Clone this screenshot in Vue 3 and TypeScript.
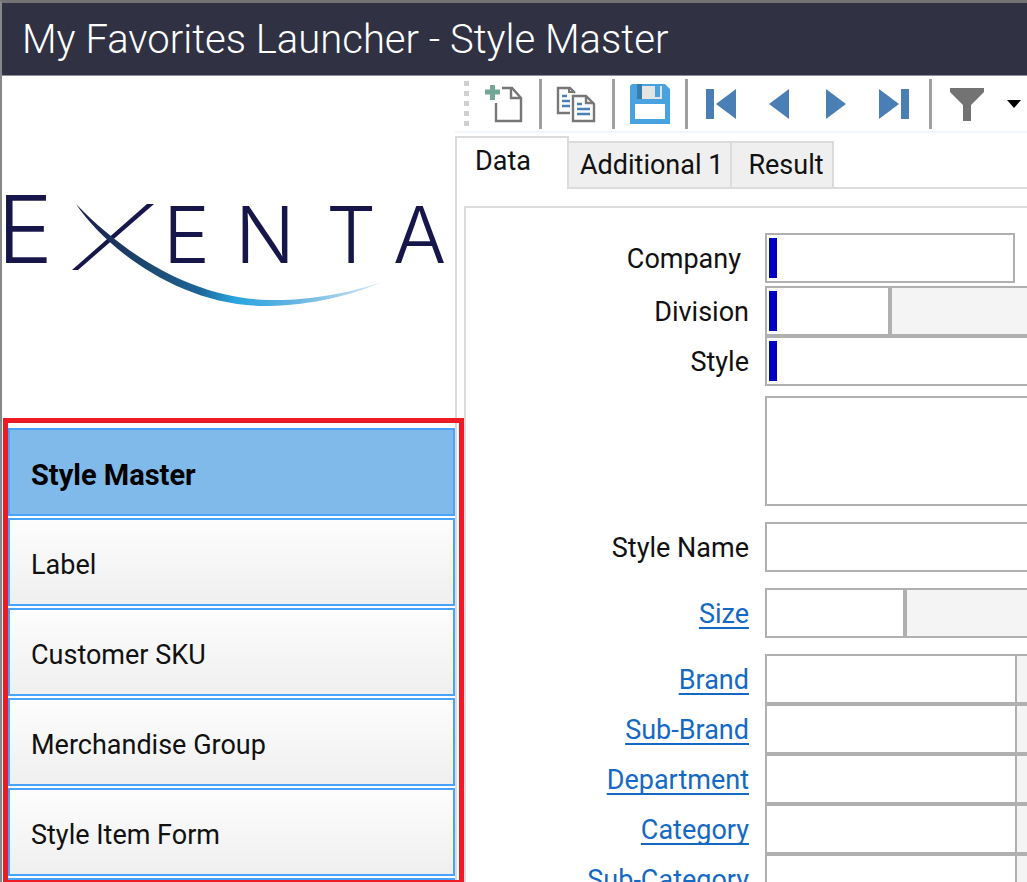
<script setup lang="ts">
import { ref } from 'vue'

interface Field {
  id: string
  label: string
  kind: 'short' | 'split' | 'full' | 'area'
  link?: boolean
  marked?: boolean
  width?: 'narrow' | 'middle' | 'broad'
  gap?: 'tight' | 'medium' | 'wide'
}

const favorites: string[] = ['Style Master', 'Label', 'Customer SKU', 'Merchandise Group', 'Style Item Form']
const activeFavorite = ref('Style Master')

const tabs: string[] = ['Data', 'Additional 1', 'Result']
const activeTab = ref('Data')

const fields: Field[] = [
  { id: 'company', label: 'Company', kind: 'short', marked: true },
  { id: 'division', label: 'Division', kind: 'split', marked: true, width: 'narrow', gap: 'tight' },
  { id: 'style', label: 'Style', kind: 'full', marked: true },
  { id: 'description', label: '', kind: 'area', gap: 'medium' },
  { id: 'style-name', label: 'Style Name', kind: 'full', gap: 'wide' },
  { id: 'size', label: 'Size', kind: 'split', link: true, width: 'middle', gap: 'wide' },
  { id: 'brand', label: 'Brand', kind: 'split', link: true, width: 'broad', gap: 'wide' },
  { id: 'sub-brand', label: 'Sub-Brand', kind: 'split', link: true, width: 'broad' },
  { id: 'department', label: 'Department', kind: 'split', link: true, width: 'broad' },
  { id: 'category', label: 'Category', kind: 'split', link: true, width: 'broad' },
  { id: 'sub-category', label: 'Sub-Category', kind: 'split', link: true, width: 'broad' },
]
</script>

<template>
  <div class="window">
    <header class="titlebar">
      <h1>My Favorites Launcher - Style Master</h1>
    </header>

    <div class="body">
      <aside class="sidebar">
        <div class="masthead">
          <svg class="logo" viewBox="0 0 453 120" role="img" aria-label="Exenta">
            <defs>
              <linearGradient id="swoosh" gradientUnits="userSpaceOnUse" x1="74" y1="0" x2="380" y2="0">
                <stop offset="0" stop-color="#1b1b48" />
                <stop offset="0.2" stop-color="#1c4368" />
                <stop offset="0.4" stop-color="#1e6496" />
                <stop offset="0.52" stop-color="#2aa5e0" />
                <stop offset="0.7" stop-color="#5fb2e2" />
                <stop offset="1" stop-color="#dbe8f4" />
              </linearGradient>
            </defs>
            <g class="wordmark">
              <text class="initial" x="-5" y="73">E</text>
              <text class="rest" x="161 233 324 391" y="73">ENTA</text>
            </g>
            <path d="M70 80 L76 80 L152 14 L145 14 Z" fill="#17164a" />
            <path d="M74 14 C105 60 180 117 266 116 C312 115 350 105 380 92 C350 102 310 111 266 110 C190 108 122 64 74 14 Z" fill="url(#swoosh)" />
          </svg>
        </div>

        <nav class="favorites" aria-label="My favorites">
          <button
            v-for="item in favorites"
            :key="item"
            type="button"
            class="favorite"
            :class="{ active: item === activeFavorite }"
            @click="activeFavorite = item"
          >{{ item }}</button>
          <div class="favorite"></div>
        </nav>
      </aside>

      <main class="content">
        <div class="toolbar" role="toolbar" aria-label="Record actions">
          <span class="grip"><i v-for="n in 5" :key="n"></i></span>
          <button type="button" class="tool new" aria-label="New">
            <svg width="40" height="40" viewBox="0 0 40 40">
              <path d="M12 19 V37 H37 V14 L28 4 H18" fill="none" stroke="#777" stroke-width="2.4" />
              <path d="M27 4 V14 H37" fill="none" stroke="#777" stroke-width="2.4" />
              <path d="M1 8 H16 M8.5 1 V16" stroke="#74a797" stroke-width="5" />
            </svg>
          </button>
          <span class="divider"></span>
          <button type="button" class="tool copy" aria-label="Copy">
            <svg width="40" height="40" viewBox="0 0 40 40">
              <path d="M14 29 H2 V4 H14 L19 9" fill="none" stroke="#777" stroke-width="2.4" />
              <path d="M13 4 V8 H18" fill="none" stroke="#777" stroke-width="2" />
              <path d="M6 12 H11 M6 17 H14 M6 22 H14" stroke="#4a7fb8" stroke-width="2.4" />
              <path d="M17 12 H30 L38 20 V37 H17 Z" fill="#fff" stroke="#777" stroke-width="2.4" />
              <path d="M30 12 V19 H38" fill="none" stroke="#777" stroke-width="2.4" />
              <path d="M21 20 H26 M21 25 H34 M21 30 H34" stroke="#4a7fb8" stroke-width="2.4" />
            </svg>
          </button>
          <span class="divider"></span>
          <button type="button" class="tool save" aria-label="Save">
            <svg width="40" height="40" viewBox="0 0 40 40">
              <path d="M2 0 H35 L40 5 V40 H0 V2 Z" fill="#48a3e0" />
              <path d="M7 0 H12 V15 H7 Z" fill="#377dab" />
              <path d="M12 2 H32 V15 H12 Z" fill="#e4e4e4" />
              <path d="M25 2 H30 V13 H25 Z" fill="#48a3e0" />
              <path d="M5 20 H35 V35 H5 Z" fill="#fff" />
            </svg>
          </button>
          <span class="divider"></span>
          <button type="button" class="tool first" aria-label="First record">
            <svg width="30" height="30" viewBox="0 0 30 30"><path d="M0 0 H8 V30 H0 Z M30 0 V30 L10 15 Z" fill="#4a7fb5" /></svg>
          </button>
          <button type="button" class="tool previous" aria-label="Previous record">
            <svg width="20" height="30" viewBox="0 0 20 30"><path d="M20 0 V30 L0 15 Z" fill="#4a7fb5" /></svg>
          </button>
          <button type="button" class="tool next" aria-label="Next record">
            <svg width="20" height="30" viewBox="0 0 20 30"><path d="M0 0 V30 L20 15 Z" fill="#4a7fb5" /></svg>
          </button>
          <button type="button" class="tool last" aria-label="Last record">
            <svg width="30" height="30" viewBox="0 0 30 30"><path d="M22 0 H30 V30 H22 Z M0 0 V30 L20 15 Z" fill="#4a7fb5" /></svg>
          </button>
          <span class="divider"></span>
          <button type="button" class="tool filter" aria-label="Filter">
            <svg width="34" height="34" viewBox="0 0 34 34"><path d="M0 1 H34 V5 L21 18 V34 H13 V18 L0 5 Z" fill="#737373" /></svg>
          </button>
          <button type="button" class="tool more" aria-label="Filter options">
            <svg width="14" height="8" viewBox="0 0 14 8"><path d="M0 0 H14 L7 8 Z" fill="#000" /></svg>
          </button>
        </div>

        <div class="tabs" role="tablist">
          <button
            v-for="tab in tabs"
            :key="tab"
            type="button"
            role="tab"
            class="tab"
            :class="{ selected: tab === activeTab }"
            :aria-selected="tab === activeTab"
            @click="activeTab = tab"
          >{{ tab }}</button>
          <span class="tab-line"></span>
        </div>

        <div class="panel">
          <form class="group" @submit.prevent>
            <div v-for="field in fields" :key="field.id" class="row" :class="[field.kind, field.gap]">
              <span class="caption" :class="{ inset: field.kind === 'short' }">
                <label v-if="field.label" :for="field.id">
                  <a v-if="field.link" href="#">{{ field.label }}</a>
                  <template v-else>{{ field.label }}</template>
                </label>
              </span>
              <textarea v-if="field.kind === 'area'" :id="field.id" class="box" aria-label="Description"></textarea>
              <template v-else>
                <span class="entry" :class="[field.kind, field.width]">
                  <i v-if="field.marked" class="mark"></i>
                  <input :id="field.id" type="text" />
                </span>
                <input
                  v-if="field.kind === 'split'"
                  class="lookup"
                  :class="field.width"
                  type="text"
                  readonly
                  :aria-label="field.label + ' description'"
                />
              </template>
            </div>
          </form>
        </div>
      </main>
    </div>
  </div>
</template>

<style>
html,
body {
  margin: 0;
  background: #fff;
}
</style>

<style scoped>
* {
  box-sizing: border-box;
}

.window {
  display: flex;
  flex-direction: column;
  height: 100vh;
  overflow: hidden;
  border-top: 3px solid #737373;
  border-left: 2px solid #88888b;
  background: #fff;
  color: #111;
  font-family: Roboto, sans-serif;
  font-size: 27px;
}

button,
input,
textarea {
  margin: 0;
  padding: 0;
  border: 0;
  border-radius: 0;
  background: none;
  color: inherit;
  font: inherit;
  outline: 0;
}

.titlebar {
  flex: none;
  display: flex;
  align-items: center;
  height: 73px;
  padding-left: 20px;
  background: #303243;
  border-bottom: 1px solid #8f8fa0;
}

h1 {
  margin: 0;
  color: #fff;
  font-size: 40px;
  font-weight: 300;
  white-space: nowrap;
}

.body {
  flex: 1;
  display: flex;
  min-height: 0;
}

.sidebar {
  flex: none;
  display: flex;
  flex-direction: column;
  width: 453px;
}

.masthead {
  flex: none;
  height: 342px;
  padding-top: 114px;
}

.logo {
  display: block;
  width: 100%;
  overflow: visible;
}

.wordmark {
  fill: #17164a;
  font-family: Inter, sans-serif;
  font-weight: 300;
}

.initial {
  font-size: 94px;
}

.rest {
  font-size: 79px;
}

.favorites {
  position: relative;
  z-index: 1;
  flex: 1;
  display: flex;
  flex-direction: column;
  gap: 2px;
  min-height: 0;
  margin: 0 -9px -3px 1px;
  padding: 5px 4px 0 0;
  border: 5px solid #ed1c24;
  overflow: hidden;
}

.favorite {
  flex: none;
  height: 88px;
  padding: 6px 0 0 21px;
  border: 2px solid #4aa3fb;
  background: linear-gradient(#fdfdfd, #efefef);
  text-align: left;
}

.favorite.active {
  background: #7fbaea;
  color: #000;
  font-size: 29px;
  font-weight: 700;
}

.content {
  flex: 1;
  display: flex;
  flex-direction: column;
  min-width: 0;
}

.toolbar {
  flex: none;
  display: flex;
  align-items: center;
  height: 57px;
  padding-left: 9px;
  border-bottom: 2px solid #f3f7fc;
}

.tool {
  flex: none;
  display: block;
}

.tool svg {
  display: block;
}

.grip {
  flex: none;
  display: flex;
  flex-direction: column;
  gap: 5px;
  width: 5px;
}

.grip i {
  height: 5px;
  background: #cfcfcf;
}

.divider {
  flex: none;
  width: 3px;
  height: 50px;
  background: #a0a0a0;
}

.new {
  margin: 0 15px;
}

.copy {
  margin: 0 16px 0 14px;
}

.save {
  margin: 0 15px;
}

.first {
  margin-left: 18px;
}

.previous {
  margin-left: 33px;
}

.next {
  margin-left: 37px;
}

.last {
  margin: 0 20px 0 33px;
}

.filter {
  margin-left: 18px;
}

.more {
  margin-left: 23px;
}

.tabs {
  flex: none;
  display: flex;
  align-items: flex-end;
  height: 56px;
  padding-top: 3px;
}

.tab {
  flex: none;
  height: 48px;
  padding: 0 8px 0 16px;
  border: solid #dcdcdc;
  border-width: 2px 2px 2px 0;
  background: #efefef;
}

.tab:nth-child(2) {
  padding: 0 7px 0 11px;
}

.tab.selected {
  align-self: stretch;
  height: auto;
  padding: 0 36px 5px 18px;
  border-width: 2px 2px 0 2px;
  background: #fff;
}

.tab-line {
  flex: 1;
  height: 2px;
  background: #dcdcdc;
}

.panel {
  flex: 1;
  display: flex;
  min-height: 0;
  padding: 17px 0 0 7px;
  border-left: 2px solid #dcdcdc;
}

.group {
  flex: 1;
  min-width: 0;
  padding-top: 25px;
  border: solid #dcdcdc;
  border-width: 2px 0 0 2px;
}

.row {
  display: flex;
  height: 50px;
}

.row.area {
  height: 110px;
}

.row.tight {
  margin-top: 3px;
}

.row.medium {
  margin-top: 10px;
}

.row.wide {
  margin-top: 16px;
}

.caption {
  flex: none;
  display: flex;
  align-items: center;
  justify-content: flex-end;
  width: 299px;
  padding: 2px 16px 0 0;
  white-space: nowrap;
}

.caption.inset {
  padding-right: 24px;
}

.caption a {
  color: #1469c4;
  text-decoration-thickness: 2px;
  text-underline-offset: 4px;
  text-decoration-skip-ink: none;
}

.entry,
.box {
  flex: 1;
  min-width: 0;
  border: 2px solid #b0b0b0;
  border-right: 0;
  background: #fff;
}

.entry {
  display: flex;
}

.entry input {
  flex: 1;
  min-width: 0;
  padding: 0 4px;
}

.box {
  height: 100%;
  resize: none;
}

.entry.short,
.entry.split {
  flex: none;
  border-right: 2px solid #b0b0b0;
}

.entry.short {
  width: 250px;
}

.entry.narrow {
  width: 125px;
}

.entry.middle {
  width: 140px;
}

.entry.broad {
  width: 252px;
}

.mark {
  flex: none;
  width: 8px;
  margin: 3px 0 3px 2px;
  background: #0000c0;
}

.lookup {
  flex: 1;
  min-width: 0;
  border: solid #b0b0b0;
  border-width: 2px 0 2px 2px;
  background: #f4f4f4;
}

.lookup.broad {
  border-left: 0;
}
</style>
